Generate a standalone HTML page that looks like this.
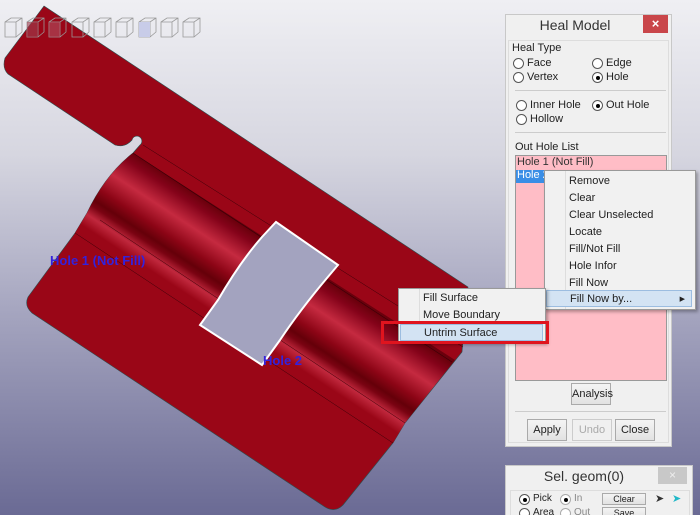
<!DOCTYPE html>
<html style="overflow:hidden;width:700px;height:515px"><head><style>
*{margin:0;padding:0;box-sizing:border-box}
body{width:700px;height:515px;overflow:hidden;position:relative;font-family:"Liberation Sans","DejaVu Sans",sans-serif;font-size:11px;color:#222;background:linear-gradient(#efeff3 0%,#d6d6e0 30%,#a6a6c0 60%,#6a6a94 100%)}
.a{position:absolute;white-space:nowrap}
.rb{position:absolute;width:11px;height:11px;border:1px solid #555;border-radius:50%;background:#fff}
.rb.on::after{content:"";position:absolute;left:2.5px;top:2.5px;width:4px;height:4px;border-radius:50%;background:#000}
.btn{position:absolute;border:1px solid #aaa;background:linear-gradient(#f4f4f4,#e2e2e2);text-align:center;font-size:11px;line-height:20px}
.menu{position:absolute;background:#f1f1f1;border:1px solid #999;box-shadow:2px 2px 3px rgba(0,0,0,.3)}
.mi{position:absolute;left:0;right:0;height:17px;line-height:17px;font-size:11px;color:#222}
</style></head><body>
<svg class="a" style="left:0;top:0" width="700" height="515">
<defs>
<linearGradient id="cyl" gradientUnits="userSpaceOnUse" x1="133" y1="153" x2="79" y2="235">
<stop offset="0" stop-color="#6a000c"/><stop offset=".1" stop-color="#85031a"/><stop offset=".3" stop-color="#c52a40"/><stop offset=".5" stop-color="#8d0516"/><stop offset=".62" stop-color="#650009"/><stop offset=".68" stop-color="#7a0312"/><stop offset=".78" stop-color="#c0283d"/><stop offset=".9" stop-color="#9a0617"/><stop offset="1" stop-color="#9a0617"/>
</linearGradient>
</defs>
<path d="M44,6 L468,287 L462,352 L405,423 L393,443 L343,505 Q335,513 325,507 L32,313 Q24,306 28,297 L75,233 L87,213 Q105,175 133,153 L140,145 A5,5 0 1 0 132,140 Q125,148 115,145 L8,74 Q2,68 5,58 Z" fill="#9a0617" stroke="#2a5050" stroke-width="0.6"/>
<path d="M133,153 L455,360 L405,423 L393,443 L75,233 L87,213 Q105,175 133,153 Z" fill="url(#cyl)"/>
<path d="M143,145 L463,347" stroke="#3a0008" stroke-width="0.5"/>
<path d="M133,153 L452,362" stroke="#3a0008" stroke-width="0.7"/>
<path d="M100,220 L405,423 M75,233 L393,443" stroke="#3a0008" stroke-width="0.5" fill="none"/>
<path d="M276,222 L338,265 L327,278 Q300,310 280,340 L262,365 L200,325 L218,300 Q240,262 262,237 Z" fill="#a3a3bf" stroke="#fff" stroke-width="2"/>
<g fill="none" stroke="#999" stroke-width="0.8">
<g id="cb"><path d="M5,22 L11,18 L22,18 L22,32 L16,37 L5,37 Z M5,22 L16,22 L22,18 M16,22 L16,37"/></g>
<use href="#cb" x="22"/><use href="#cb" x="44"/><use href="#cb" x="67"/><use href="#cb" x="89"/><use href="#cb" x="111"/><use href="#cb" x="134"/><use href="#cb" x="156"/><use href="#cb" x="178"/>
</g>
<path d="M27,22 L38,22 L38,37 L27,37 Z" fill="#a04050" opacity=".6"/>
<path d="M49,22 L60,22 L60,37 L49,37 Z" fill="#b05060" opacity=".6"/>
<path d="M139,22 L150,22 L150,37 L139,37 Z" fill="#c8cce8"/>
<text x="50" y="265" font-family="Liberation Sans" font-weight="bold" font-size="13" fill="#3322dd">Hole 1 (Not Fill)</text>
<text x="263" y="365" font-family="Liberation Sans" font-weight="bold" font-size="13" fill="#3322dd">Hole 2</text>
</svg>

<div class="a" style="left:505px;top:14px;width:167px;height:433px;background:#f0f0f0;border:1px solid #c8c8c8"></div>
<div class="a" style="left:505px;top:17px;width:140px;text-align:center;font-size:14px;color:#333">Heal Model</div>
<div class="a" style="left:643px;top:15px;width:25px;height:18px;background:#c9464a;color:#fff;text-align:center;font-size:13px;font-weight:bold;line-height:18px">×</div>
<div class="a" style="left:508px;top:40px;width:161px;height:403px;border:1px solid #ddd"></div>
<div class="a" style="left:512px;top:42px">Heal Type</div>
<div class="rb" style="left:513px;top:58px"></div><div class="a" style="left:527px;top:57px">Face</div>
<div class="rb" style="left:592px;top:58px"></div><div class="a" style="left:606px;top:57px">Edge</div>
<div class="rb" style="left:513px;top:72px"></div><div class="a" style="left:527px;top:71px">Vertex</div>
<div class="rb on" style="left:592px;top:72px"></div><div class="a" style="left:606px;top:71px">Hole</div>
<div class="a" style="left:515px;top:90px;width:151px;border-top:1px solid #ccc"></div>
<div class="rb" style="left:516px;top:100px"></div><div class="a" style="left:530px;top:99px">Inner Hole</div>
<div class="rb on" style="left:592px;top:100px"></div><div class="a" style="left:606px;top:99px">Out Hole</div>
<div class="rb" style="left:516px;top:114px"></div><div class="a" style="left:530px;top:113px">Hollow</div>
<div class="a" style="left:515px;top:132px;width:151px;border-top:1px solid #ccc"></div>
<div class="a" style="left:515px;top:141px">Out Hole List</div>
<div class="a" style="left:515px;top:155px;width:152px;height:226px;background:#ffbdc6;border:1px solid #999"></div>
<div class="a" style="left:517px;top:156px;color:#333">Hole 1 (Not Fill)</div>
<div class="a" style="left:516px;top:170px;width:150px;height:13px;background:#3a8ee6"></div>
<div class="a" style="left:517px;top:169px;color:#fff">Hole 2</div>
<div class="btn" style="left:571px;top:383px;width:40px;height:22px">Analysis</div>
<div class="a" style="left:515px;top:411px;width:151px;border-top:1px solid #ccc"></div>
<div class="btn" style="left:527px;top:419px;width:40px;height:22px">Apply</div>
<div class="btn" style="left:572px;top:419px;width:40px;height:22px;color:#aaa;border-color:#ccc;background:#f0f0f0">Undo</div>
<div class="btn" style="left:615px;top:419px;width:40px;height:22px">Close</div>

<div class="menu" style="left:544px;top:170px;width:152px;height:140px">
<div class="a" style="left:20px;top:0;height:138px;border-left:1px solid #ddd"></div>
<div class="mi" style="top:2px;padding-left:24px">Remove</div>
<div class="mi" style="top:19px;padding-left:24px">Clear</div>
<div class="mi" style="top:36px;padding-left:24px">Clear Unselected</div>
<div class="mi" style="top:53px;padding-left:24px">Locate</div>
<div class="mi" style="top:70px;padding-left:24px">Fill/Not Fill</div>
<div class="mi" style="top:87px;padding-left:24px">Hole Infor</div>
<div class="mi" style="top:104px;padding-left:24px">Fill Now</div>
<div class="mi" style="top:119px;left:1px;right:3px;background:#d3e3f3;border:1px solid #9cbde0;padding-left:23px">Fill Now by...<span style="position:absolute;right:6px;font-size:7px">▶</span></div>
</div>
<div class="menu" style="left:398px;top:288px;width:148px;height:55px">
<div class="a" style="left:20px;top:0;height:53px;border-left:1px solid #ddd"></div>
<div class="mi" style="top:1px;padding-left:24px">Fill Surface</div>
<div class="mi" style="top:18px;padding-left:24px">Move Boundary</div>
<div class="mi" style="top:35px;left:1px;right:2px;background:#d3e3f3;border:1px solid #9cbde0;padding-left:23px">Untrim Surface</div>
</div>
<div class="a" style="left:381px;top:321px;width:168px;height:23px;border:3px solid #e0141e"></div>

<div class="a" style="left:505px;top:465px;width:188px;height:50px;background:#f0f0f0;border:1px solid #c8c8c8;border-bottom:none"></div>
<div class="a" style="left:505px;top:468px;width:158px;text-align:center;font-size:14px;color:#333">Sel. geom(0)</div>
<div class="a" style="left:658px;top:467px;width:29px;height:17px;background:#c8c8c8;color:#eee;text-align:center;line-height:17px;font-size:12px">×</div>
<div class="a" style="left:510px;top:490px;width:180px;height:25px;border:1px solid #ddd;border-bottom:none"></div>
<div class="rb on" style="left:519px;top:494px"></div><div class="a" style="left:533px;top:493px;font-size:10px">Pick</div>
<div class="rb on" style="left:560px;top:494px;border-color:#aaa"></div><div class="a" style="left:574px;top:493px;font-size:10px;color:#888">In</div>
<div class="rb" style="left:519px;top:508px"></div><div class="a" style="left:533px;top:507px;font-size:10px">Area</div>
<div class="rb" style="left:560px;top:508px;border-color:#aaa"></div><div class="a" style="left:574px;top:507px;font-size:10px;color:#888">Out</div>
<div class="btn" style="left:602px;top:493px;width:44px;height:12px;line-height:11px;font-size:9px">Clear</div>
<div class="btn" style="left:602px;top:507px;width:44px;height:12px;line-height:11px;font-size:9px">Save</div>
<div class="a" style="left:655px;top:492px;font-size:11px;color:#333">➤</div>
<div class="a" style="left:672px;top:492px;font-size:11px;color:#20b8c8">➤</div>
</body></html>
